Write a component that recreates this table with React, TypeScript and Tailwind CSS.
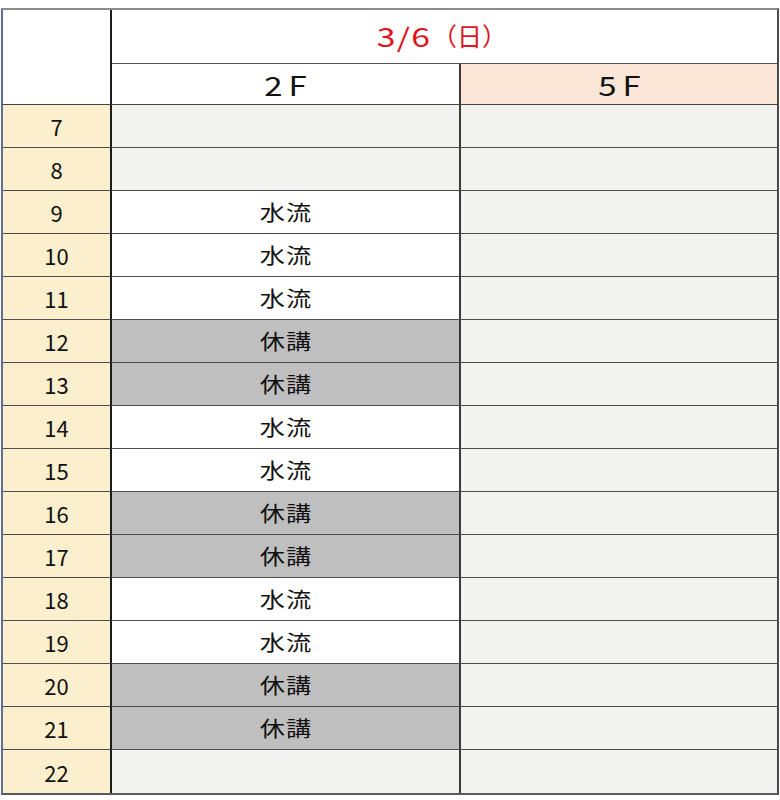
import React from "react";

type Kind = "empty" | "water" | "rest";

const rows: { h: number; k: Kind }[] = [
  { h: 7, k: "empty" },
  { h: 8, k: "empty" },
  { h: 9, k: "water" },
  { h: 10, k: "water" },
  { h: 11, k: "water" },
  { h: 12, k: "rest" },
  { h: 13, k: "rest" },
  { h: 14, k: "water" },
  { h: 15, k: "water" },
  { h: 16, k: "rest" },
  { h: 17, k: "rest" },
  { h: 18, k: "water" },
  { h: 19, k: "water" },
  { h: 20, k: "rest" },
  { h: 21, k: "rest" },
  { h: 22, k: "empty" },
];

const font = { fontFamily: '"Noto Sans CJK JP", "Noto Sans", sans-serif' };

export default function App() {
  return (
    <div className="pt-[8px] pl-[1px] bg-white min-h-[800px]" style={font}>
      <div className="w-[778px] border-l-2 border-l-[#5d6f98] border-t-2 border-t-[#8c8c8c] border-r-2 border-r-[#4a4a4a] border-b-2 border-b-[#5a5a5a] grid grid-cols-[109px_349px_316px]">
        <div className="row-span-2 bg-white border-r-2 border-r-[#1c1c1c] border-b border-b-[#444]" />
        <div className="col-span-2 h-[54px] bg-white border-b border-b-[#555] flex items-center justify-center text-[#e0141e] pb-[2px] pr-[6px]">
          <span className="inline-block text-[26px] tracking-[1px] leading-none scale-x-[1.3] mx-[7px]">3/6</span>
          <span className="inline-block text-[25px] leading-none">（日）</span>
        </div>
        <div className="h-[41px] bg-white border-r-2 border-r-[#3a3a3a] border-b border-b-[#444] flex items-center justify-center text-[#111]">
          <span className="inline-block text-[27px] tracking-[5px] pl-[5px] leading-none scale-x-[1.22]">2F</span>
        </div>
        <div className="h-[41px] bg-[#fbe6d7] border-b border-b-[#444] flex items-center justify-center text-[#111]">
          <span className="inline-block text-[27px] tracking-[5px] pl-[5px] leading-none scale-x-[1.22]">5F</span>
        </div>
        {rows.map((r, i) => {
          const last = i === rows.length - 1;
          const bb = last ? "" : "border-b border-b-[#4d4d4d]";
          const mid =
            r.k === "empty"
              ? "bg-[#f2f2f1]"
              : r.k === "rest"
              ? "bg-[#bfbfbf]"
              : "bg-white";
          return (
            <React.Fragment key={r.h}>
              <div
                className={`h-[43px] bg-[#fcefcd] border-r-2 border-r-[#1c1c1c] flex items-center justify-center text-[22px] text-[#111] pt-[1px] ${bb}`}
              >
                {r.h}
              </div>
              <div
                className={`h-[43px] border-r-2 border-r-[#3a3a3a] flex items-center justify-center text-[#111] ${mid} ${bb}`}
              >
                <span className="inline-block text-[21px] tracking-[1px] pl-[1px] scale-x-[1.2]">
                  {r.k === "water" ? "水流" : r.k === "rest" ? "休講" : ""}
                </span>
              </div>
              <div className={`h-[43px] bg-[#f2f2f1] ${bb}`} />
            </React.Fragment>
          );
        })}
      </div>
    </div>
  );
}
